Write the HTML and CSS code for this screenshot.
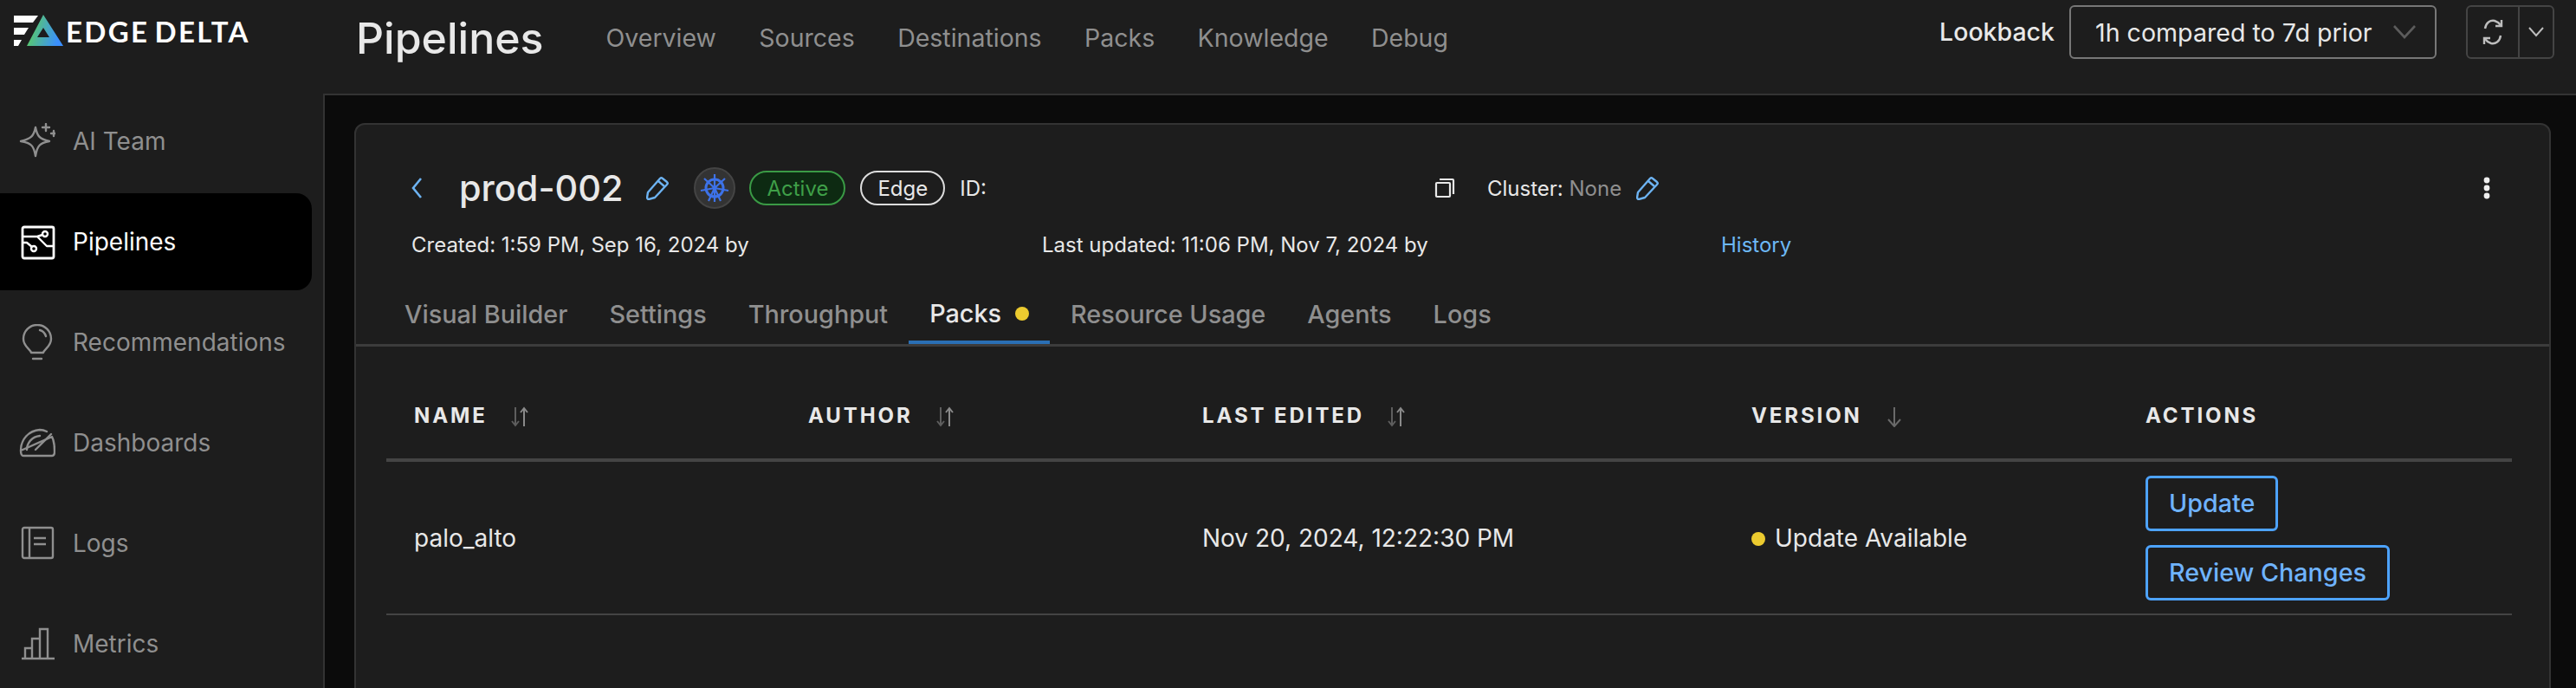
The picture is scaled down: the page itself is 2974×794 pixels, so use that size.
FILE: index.html
```html
<!DOCTYPE html>
<html lang="en">
<head>
<meta charset="utf-8">
<title>Pipelines</title>
<link rel="stylesheet" href="styles.css">
</head>
<body>
<div class="app">
  <aside class="sidebar">
    <div class="brand">
      <svg class="brand-mark" width="58" height="38" viewBox="0 0 58 38">
        <defs><linearGradient id="lg" x1="0" y1="0" x2="1" y2="0.25"><stop offset="0.1" stop-color="#5ccf5a"/><stop offset="1" stop-color="#3a8fff"/></linearGradient></defs>
        <path d="M0 1H28L22 9H0Z M0 15H17L12 23H0Z M0 29H9L5 36H0Z" fill="#fff"/>
        <path d="M34 0L57 36H15Z M34 15L27 26H41Z" fill="url(#lg)" fill-rule="evenodd"/>
      </svg>
      <span class="brand-name">EDGE DELTA</span>
    </div>
    <nav class="side-nav">
      <a class="side-item">
        <svg class="side-icon" viewBox="0 0 42 42" fill="none" stroke="currentColor" stroke-width="2.4" stroke-linejoin="round" stroke-linecap="round"><path d="M19 8C21 18 23 21 35 24C24 26 21 29 19 41C17 29 14 26 2 24C14 21 17 18 19 8Z" transform="translate(0 -3)"/><path d="M31 1V9M27 5H35M40 9V15M37 12H43"/></svg>
        <span>AI Team</span>
      </a>
      <a class="side-item active">
        <svg class="side-icon" viewBox="0 0 42 42" fill="none" stroke="currentColor" stroke-width="2.4" stroke-linejoin="round"><rect x="4" y="4" width="36" height="36" rx="2" stroke-width="2.8"/><path d="M5 15H21L32 26H39M21 15L27 13"/><path d="M5 22H9L15 27"/><circle cx="30" cy="12" r="3"/><circle cx="17" cy="29" r="3"/></svg>
        <span>Pipelines</span>
      </a>
      <a class="side-item">
        <svg class="side-icon" viewBox="0 0 42 42" fill="none" stroke="currentColor" stroke-width="2.4" stroke-linecap="round" stroke-linejoin="round"><path d="M14 33C13 29 5 26 5 17A16 16 0 0 1 37 17C37 26 29 29 28 33Z"/><path d="M16 40H26"/><path d="M24 7C28 8 30 11 31 14"/></svg>
        <span>Recommendations</span>
      </a>
      <a class="side-item">
        <svg class="side-icon" viewBox="0 0 42 42" fill="none" stroke="currentColor" stroke-width="2.4" stroke-linecap="round" stroke-linejoin="round"><path d="M2 30C2 17 11 7 24 6C27 6 30 7 32 8M38 14C40 18 41 24 41 31C41 35 40 36 38 36H5C3 36 2 34 2 30Z"/><path d="M9 29C9 21 15 14 24 13"/><path d="M19 29L37 11"/></svg>
        <span>Dashboards</span>
      </a>
      <a class="side-item">
        <svg class="side-icon" viewBox="0 0 42 42" fill="none" stroke="currentColor" stroke-width="2.4" stroke-linejoin="round"><rect x="4" y="3" width="35" height="35" rx="2"/><path d="M12 3V38M17 15H31M17 22H31"/></svg>
        <span>Logs</span>
      </a>
      <a class="side-item">
        <svg class="side-icon" viewBox="0 0 42 42" fill="none" stroke="currentColor" stroke-width="2.4"><path d="M3 38H41M7 38V26H15V38M15 38V15H24V38M24 38V4H33V38"/></svg>
        <span>Metrics</span>
      </a>
    </nav>
  </aside>

  <main class="main">
    <header class="topbar">
      <h1 class="page-title">Pipelines</h1>
      <nav class="top-nav">
        <a>Overview</a><a>Sources</a><a>Destinations</a><a>Packs</a><a>Knowledge</a><a>Debug</a>
      </nav>
      <div class="lookback">
        <span class="lookback-label">Lookback</span>
        <div class="select">
          <span>1h compared to 7d prior</span>
          <svg width="26" height="16" viewBox="0 0 26 16" fill="none" stroke="#5c5c5c" stroke-width="2.6"><path d="M1 1L13 14L25 1"/></svg>
        </div>
        <div class="split">
          <div class="split-main">
            <svg width="24" height="34" viewBox="0 0 24 34" fill="none" stroke="#bdbdbd" stroke-width="2.4"><path d="M3 13C4 6 9 3 14 4C17 5 19 6 21 9"/><path d="M22 3V10H15"/><path d="M21 21C20 28 15 31 10 30C7 29 5 28 3 25"/><path d="M2 31V24H9"/></svg>
          </div>
          <div class="split-arrow">
            <svg width="18" height="12" viewBox="0 0 18 12" fill="none" stroke="#bdbdbd" stroke-width="2"><path d="M1 1L9 10L17 1"/></svg>
          </div>
        </div>
      </div>
    </header>

    <section class="content">
      <div class="card">
        <div class="card-head">
          <div class="title-row">
            <svg class="back" width="12" height="24" viewBox="0 0 12 24" fill="none" stroke="#6db3f2" stroke-width="2.6"><path d="M11 1L2 12L11 23"/></svg>
            <h2 class="pipeline-name">prod-002</h2>
            <svg class="pencil" width="26" height="28" viewBox="0 0 26 28" fill="none" stroke="#6db3f2" stroke-width="2.4" stroke-linejoin="round"><path d="M2 19L16 3C17 2 18 2 19 3L24 7C25 8 25 9 24 10L10 25L3 27C2 27 1 26 1 25Z"/><path d="M14 6L21 12"/></svg>
            <span class="k8s">
              <svg width="34" height="34" viewBox="0 0 34 34" fill="none" stroke="#3d72e8"><circle cx="17" cy="17" r="10" stroke-width="3"/><circle cx="17" cy="17" r="2.5" fill="#3d72e8" stroke="none"/><path stroke-width="2.2" d="M17 1V33M17 17L29 6M17 17L5 6M17 17L33 20M17 17L1 20M17 17L10 32M17 17L24 32"/></svg>
            </span>
            <span class="pill pill-active">Active</span>
            <span class="pill pill-edge">Edge</span>
            <span class="id-label">ID:</span>
            <svg class="copy" width="24" height="24" viewBox="0 0 24 24" fill="none" stroke="#e8e8e8" stroke-width="2.2"><rect x="2" y="6" width="16" height="16" rx="1"/><path d="M6 2H21C22 2 22 3 22 3V19"/></svg>
            <span class="cluster">Cluster: <span class="muted">None</span></span>
            <svg class="pencil pencil-small" width="26" height="28" viewBox="0 0 26 28" fill="none" stroke="#6db3f2" stroke-width="2.4" stroke-linejoin="round"><path d="M2 19L16 3C17 2 18 2 19 3L24 7C25 8 25 9 24 10L10 25L3 27C2 27 1 26 1 25Z"/><path d="M14 6L21 12"/></svg>
            <svg class="kebab" width="8" height="26" viewBox="0 0 8 26" fill="#eee"><circle cx="4" cy="4" r="3.4"/><circle cx="4" cy="13" r="3.4"/><circle cx="4" cy="22" r="3.4"/></svg>
          </div>
          <div class="meta-row">
            <span class="meta-created">Created: 1:59 PM, Sep 16, 2024 by</span>
            <span class="meta-updated">Last updated: 11:06 PM, Nov 7, 2024 by</span>
            <a class="history">History</a>
          </div>
          <div class="tabs">
            <a class="tab">Visual Builder</a>
            <a class="tab">Settings</a>
            <a class="tab">Throughput</a>
            <a class="tab tab-active">Packs<i class="dot"></i></a>
            <a class="tab">Resource Usage</a>
            <a class="tab">Agents</a>
            <a class="tab">Logs</a>
          </div>
        </div>

        <table class="packs">
          <thead>
            <tr>
              <th class="col-a">NAME<svg class="sort" width="22" height="24" viewBox="0 0 22 24" fill="none" stroke-width="2"><path stroke="#5e5e5e" d="M6 1V21M2 17L6 22L10 17"/><path stroke="#8a8a8a" d="M16 23V3M12 7L16 2L20 7"/></svg></th>
              <th class="col-a">AUTHOR<svg class="sort" width="22" height="24" viewBox="0 0 22 24" fill="none" stroke-width="2"><path stroke="#5e5e5e" d="M6 1V21M2 17L6 22L10 17"/><path stroke="#8a8a8a" d="M16 23V3M12 7L16 2L20 7"/></svg></th>
              <th class="col-b">LAST EDITED<svg class="sort" width="22" height="24" viewBox="0 0 22 24" fill="none" stroke-width="2"><path stroke="#5e5e5e" d="M6 1V21M2 17L6 22L10 17"/><path stroke="#8a8a8a" d="M16 23V3M12 7L16 2L20 7"/></svg></th>
              <th class="col-a">VERSION<svg class="sort" width="22" height="24" viewBox="0 0 22 24" fill="none" stroke-width="2"><path stroke="#6a6a6a" d="M11 1V22M4 15L11 23L18 15"/></svg></th>
              <th class="col-a">ACTIONS</th>
            </tr>
          </thead>
          <tbody>
            <tr>
              <td>palo_alto</td>
              <td></td>
              <td>Nov 20, 2024, 12:22:30 PM</td>
              <td><i class="dot dot-status"></i>Update Available</td>
              <td>
                <div class="actions">
                  <button class="btn">Update</button>
                  <button class="btn">Review Changes</button>
                </div>
              </td>
            </tr>
          </tbody>
        </table>
      </div>
    </section>
  </main>
</div>
</body>
</html>
```
FILE: styles.css
```css
* { box-sizing: border-box; }
html, body { margin: 0; height: 794px; overflow: hidden; }
body { background: #1d1d1d; color: #e8e8e8; font-family: Inter, "Liberation Sans", sans-serif; font-size: 28px; }
a { color: inherit; text-decoration: none; }
h1, h2 { margin: 0; }
svg { display: block; flex: none; }

.app { display: flex; height: 794px; }

.sidebar { width: 373px; flex: none; }
.brand { display: flex; align-items: center; height: 107px; padding: 0 0 35px 16px; }
.brand-mark { margin-right: 2px; }
.brand-name { font-family: Lato, sans-serif; font-weight: 700; font-size: 33px; line-height: 1; letter-spacing: 2.3px; color: #fff; white-space: nowrap; word-spacing: -4px; }

.side-nav { display: flex; flex-direction: column; gap: 4px; padding-right: 13px; }
.side-item { display: flex; align-items: center; gap: 20px; height: 112px; padding-left: 22px; color: #8f8f8f; border-radius: 0 18px 18px 0; }
.side-item.active { background: #000; color: #fff; }
.side-icon { width: 42px; height: 42px; }

.main { flex: 1; min-width: 0; display: flex; flex-direction: column; }
.topbar { display: flex; align-items: flex-start; height: 108px; flex: none; padding: 0 25px 0 38px; }
.page-title { font-size: 50px; font-weight: 500; line-height: 58px; margin-top: 15px; }
.top-nav { display: flex; gap: 49.4px; margin-left: 72px; margin-top: 27px; color: #8f8f8f; font-size: 28.5px; line-height: 34px; }
.lookback { display: flex; align-items: flex-start; margin-left: auto; margin-top: 6px; }
.lookback-label { font-weight: 500; font-size: 28.5px; line-height: 61px; margin-right: 17px; }
.select { display: flex; align-items: center; justify-content: space-between; width: 424px; height: 62px; padding: 0 22px 0 28px; border: 2px solid #777; border-radius: 6px; font-size: 28.6px; }
.split { display: flex; height: 62px; width: 102px; margin-left: 34px; border: 2px solid #444; border-radius: 6px; }
.split-main { width: 60px; display: flex; align-items: center; justify-content: center; border-right: 2px solid #444; }
.split-arrow { flex: 1; display: flex; align-items: center; justify-content: center; }

.content { flex: 1; min-height: 0; background: #0b0b0b; border-top: 2px solid #333; border-left: 2px solid #333; padding: 32px 29px 0 34px; overflow: hidden; }
.card { height: 700px; background: #1d1d1d; border: 2px solid #333; border-radius: 12px; }
.card-head { border-bottom: 3px solid #3c3c3c; height: 256px; padding-top: 49px; }

.title-row { display: flex; align-items: center; height: 48px; padding-left: 64px; }
.back { margin-right: 43px; }
.pipeline-name { font-size: 41.4px; font-weight: 500; line-height: 48px; }
.pencil { margin-left: 27px; }
.k8s { display: flex; align-items: center; justify-content: center; width: 48px; height: 48px; margin-left: 29px; border-radius: 50%; background: #333; border: 2px solid #444; }
.pill { display: flex; align-items: center; height: 40px; padding: 0 18px; border-radius: 20px; font-size: 24px; border: 2px solid; }
.pill-active { margin-left: 16px; color: #3f9f48; background: #0d2a12; border-color: #3a9a45; }
.pill-edge { margin-left: 17px; color: #e8e8e8; border-color: #ddd; }
.id-label { margin-left: 17px; font-size: 24px; }
.copy { margin-left: 517px; }
.cluster { margin-left: 37px; font-size: 24px; }
.muted { color: #8f8f8f; }
.pencil-small { margin-left: 17px; }
.kebab { margin-left: auto; margin-right: 68px; }

.meta-row { display: flex; align-items: center; height: 34px; margin-top: 24px; padding-left: 64px; font-size: 24px; }
.meta-created { width: 728px; }
.meta-updated { width: 784px; }
.history { color: #6db8f5; }

.tabs { display: flex; margin-top: 31px; height: 67px; padding-left: 32px; color: #8f8f8f; }
.tab { display: flex; align-items: center; padding: 0 24px 3px; height: 67px; font-size: 28.8px; font-weight: 500; }
.tab-active { color: #e8e8e8; border-bottom: 4px solid #2a6fb5; padding-bottom: 0; }
.dot { display: inline-block; width: 16px; height: 16px; border-radius: 50%; background: #eccb2f; margin-left: 16px; }

.packs { border-collapse: collapse; table-layout: fixed; width: 2454px; margin-left: 35px; }
.col-a { width: 455px; }
.col-b { width: 634px; }
.packs th { height: 131px; padding: 30px 32px 0; text-align: left; font-size: 24px; font-weight: 700; letter-spacing: 2.9px; border-bottom: 4px solid #444; white-space: nowrap; }
.sort { display: inline-block; vertical-align: -5px; margin-left: 26px; }
.packs td { padding: 0 32px; height: 178px; border-bottom: 2px solid #444; white-space: nowrap; }
.dot-status { margin: 0 11px 0 0; vertical-align: 1px; }
.actions { display: flex; flex-direction: column; align-items: flex-start; gap: 16px; }
.btn { height: 64px; padding: 0 24px; background: transparent; border: 3px solid #4da3ff; border-radius: 6px; color: #6fb3ff; font: 500 28.7px Inter, sans-serif; }
```
